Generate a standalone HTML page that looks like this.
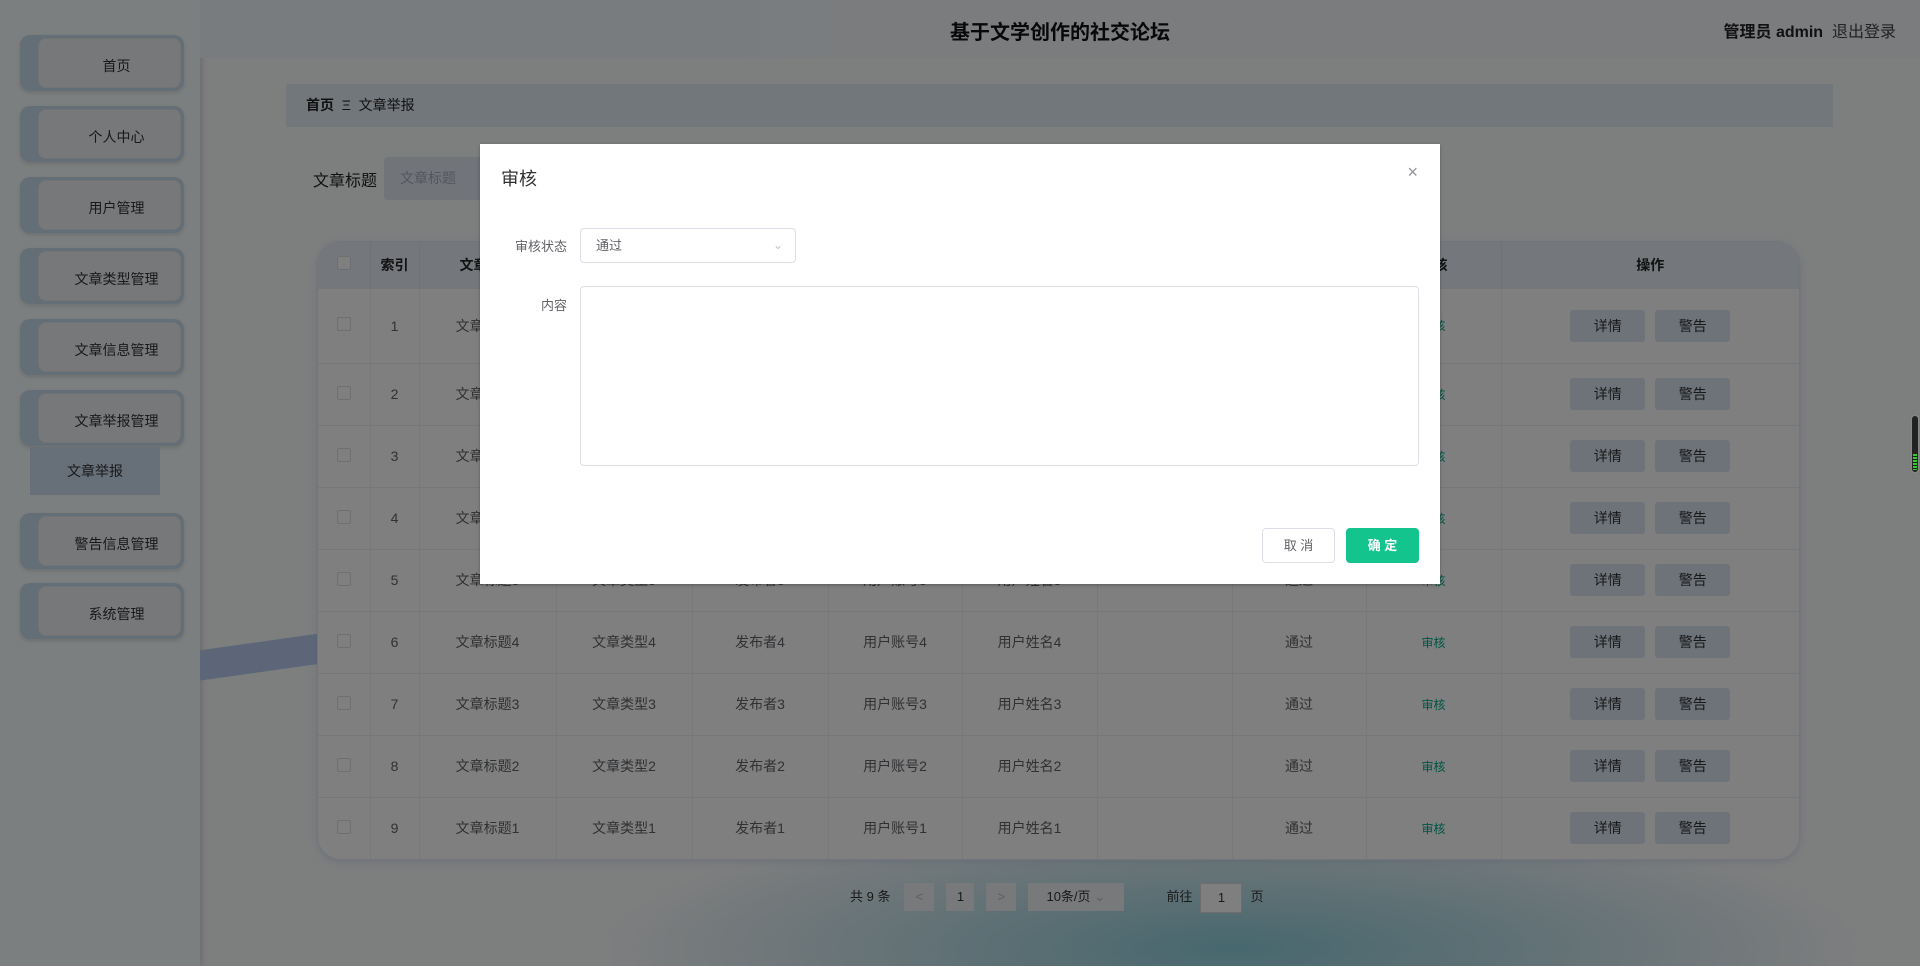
<!DOCTYPE html>
<html><head><meta charset="utf-8"><style>
*{box-sizing:border-box;margin:0;padding:0}
body{width:1920px;height:966px;overflow:hidden;position:relative;font-family:"Liberation Sans","Noto Sans CJK SC",sans-serif;background:#fbfcfd;font-size:14px;color:#606266}
.side{position:absolute;left:0;top:0;width:200px;height:966px;background:#f8fefe;box-shadow:2px 0 6px rgba(0,0,0,.15)}
.mi{position:absolute;left:20px;width:164px;height:56px;border-radius:10px;background:#c9dcef;box-shadow:0 2px 4px rgba(0,0,0,.12)}
.mi div{position:absolute;left:18px;top:3px;right:3px;bottom:3px;border-radius:8px;background:#eef1f4;border:1px solid #e3e6ea;text-align:center;line-height:54px;color:#333;font-size:14px;padding-left:14px}
.sub{position:absolute;left:30px;top:447px;width:130px;height:48px;background:#cfe0f2;text-align:center;line-height:48px;color:#333}
.head{position:absolute;left:200px;top:0;right:0;height:58px;background:linear-gradient(90deg,#f2f8fe,#f6f9fc);}
.title{position:absolute;left:0;right:0;top:16px;text-align:center;font-size:20px;font-weight:bold;color:#111;padding-left:200px}
.user{position:absolute;right:24px;top:18px;font-size:16px;color:#222}
.bc{position:absolute;left:286px;top:84px;width:1547px;height:43px;background:#e5eef8;line-height:43px;padding-left:20px;color:#222}
.wave{position:absolute;left:200px;top:620px;right:0;bottom:0;background:radial-gradient(ellipse 900px 200px at 60% 95%,#8ed0dd 0%,rgba(160,210,225,.5) 40%,transparent 70%),linear-gradient(172deg,transparent 0 30px,#b8cdf0 30px 60px,transparent 60px)}
.tbl{position:absolute;left:317px;top:241px;width:1483px;background:#fff;border-radius:24px;overflow:hidden;border:1px solid #e4ecf6;box-shadow:0 2px 8px rgba(150,180,220,.3)}
table{border-collapse:collapse;width:100%}
th{height:46px;background:#e8f0f9;color:#222;font-weight:bold;border-right:1px solid #dfe6ee}
td{height:62px;text-align:center;border-right:1px solid #eef0f2;border-top:1px solid #eceff2;color:#606266}
tr.f td{height:75px}
.cb{display:inline-block;width:14px;height:14px;border:1px solid #dcdfe6;border-radius:2px;background:#fff}
.btn{display:inline-block;width:75px;height:32px;line-height:32px;background:#dae6f3;border-radius:3px;color:#333;margin:0 5px}
.pag{position:absolute;top:883px;left:850px;height:28px;line-height:28px;color:#333;font-size:13px}
.pag span{display:inline-block;vertical-align:top}
.ov{position:absolute;inset:0;background:rgba(0,0,0,.5)}
.modal{position:absolute;left:480px;top:144px;width:960px;height:440px;background:#fff;box-shadow:0 1px 3px rgba(0,0,0,.3)}
</style></head><body>
<div class="side">
<div class="mi" style="top:35px"><div>首页</div></div>
<div class="mi" style="top:106px"><div>个人中心</div></div>
<div class="mi" style="top:177px"><div>用户管理</div></div>
<div class="mi" style="top:248px"><div>文章类型管理</div></div>
<div class="mi" style="top:319px"><div>文章信息管理</div></div>
<div class="mi" style="top:390px"><div>文章举报管理</div></div>
<div class="sub">文章举报</div>
<div class="mi" style="top:513px"><div>警告信息管理</div></div>
<div class="mi" style="top:583px"><div>系统管理</div></div>
</div>
<div class="head"></div>
<div class="title">基于文学创作的社交论坛</div>
<div class="user"><b>管理员 admin</b>&nbsp;&nbsp;<span style="color:#444">退出登录</span></div>
<div class="wave"></div>
<div class="bc"><b>首页</b>&nbsp;&nbsp;Ξ&nbsp;&nbsp;文章举报</div>
<div style="position:absolute;left:313px;top:167px;font-size:16px;color:#222">文章标题</div>
<div style="position:absolute;left:384px;top:157px;width:200px;height:43px;background:#e2ebf5;border-radius:4px;line-height:43px;padding-left:16px;color:#aab">文章标题</div>
<div class="tbl"><table>
<tr><th style="width:52px"><span class="cb"></span></th><th style="width:49px">索引</th><th style="width:137px">文章标题</th><th style="width:136px">文章类型</th><th style="width:136px">发布者</th><th style="width:134px">用户账号</th><th style="width:135px">用户姓名</th><th style="width:135px">举报内容</th><th style="width:134px">审核状态</th><th style="width:135px">审核</th><th style="border:0">操作</th></tr>
<tr class="f"><td><span class="cb"></span></td><td>1</td><td>文章标题9</td><td>文章类型9</td><td>发布者9</td><td>用户账号9</td><td>用户姓名9</td><td></td><td>通过</td><td style="color:#0a8;font-size:12px">审核</td><td style="border-right:0"><span class="btn">详情</span><span class="btn">警告</span></td></tr>
<tr><td><span class="cb"></span></td><td>2</td><td>文章标题8</td><td>文章类型8</td><td>发布者8</td><td>用户账号8</td><td>用户姓名8</td><td></td><td>通过</td><td style="color:#0a8;font-size:12px">审核</td><td style="border-right:0"><span class="btn">详情</span><span class="btn">警告</span></td></tr>
<tr><td><span class="cb"></span></td><td>3</td><td>文章标题7</td><td>文章类型7</td><td>发布者7</td><td>用户账号7</td><td>用户姓名7</td><td></td><td>通过</td><td style="color:#0a8;font-size:12px">审核</td><td style="border-right:0"><span class="btn">详情</span><span class="btn">警告</span></td></tr>
<tr><td><span class="cb"></span></td><td>4</td><td>文章标题6</td><td>文章类型6</td><td>发布者6</td><td>用户账号6</td><td>用户姓名6</td><td></td><td>通过</td><td style="color:#0a8;font-size:12px">审核</td><td style="border-right:0"><span class="btn">详情</span><span class="btn">警告</span></td></tr>
<tr><td><span class="cb"></span></td><td>5</td><td>文章标题5</td><td>文章类型5</td><td>发布者5</td><td>用户账号5</td><td>用户姓名5</td><td></td><td>通过</td><td style="color:#0a8;font-size:12px">审核</td><td style="border-right:0"><span class="btn">详情</span><span class="btn">警告</span></td></tr>
<tr><td><span class="cb"></span></td><td>6</td><td>文章标题4</td><td>文章类型4</td><td>发布者4</td><td>用户账号4</td><td>用户姓名4</td><td></td><td>通过</td><td style="color:#0a8;font-size:12px">审核</td><td style="border-right:0"><span class="btn">详情</span><span class="btn">警告</span></td></tr>
<tr><td><span class="cb"></span></td><td>7</td><td>文章标题3</td><td>文章类型3</td><td>发布者3</td><td>用户账号3</td><td>用户姓名3</td><td></td><td>通过</td><td style="color:#0a8;font-size:12px">审核</td><td style="border-right:0"><span class="btn">详情</span><span class="btn">警告</span></td></tr>
<tr><td><span class="cb"></span></td><td>8</td><td>文章标题2</td><td>文章类型2</td><td>发布者2</td><td>用户账号2</td><td>用户姓名2</td><td></td><td>通过</td><td style="color:#0a8;font-size:12px">审核</td><td style="border-right:0"><span class="btn">详情</span><span class="btn">警告</span></td></tr>
<tr><td><span class="cb"></span></td><td>9</td><td>文章标题1</td><td>文章类型1</td><td>发布者1</td><td>用户账号1</td><td>用户姓名1</td><td></td><td>通过</td><td style="color:#0a8;font-size:12px">审核</td><td style="border-right:0"><span class="btn">详情</span><span class="btn">警告</span></td></tr>
</table></div>
<div class="pag"><span>共 9 条</span><span style="width:30px;background:#f0f2f5;margin-left:14px;text-align:center;color:#bbb">&lt;</span><span style="width:28px;background:#f0f2f5;margin-left:12px;text-align:center">1</span><span style="width:30px;background:#f0f2f5;margin-left:12px;text-align:center;color:#bbb">&gt;</span><span style="width:96px;background:#f0f2f5;margin-left:12px;padding-left:18px">10条/页 <span style="color:#bbb">⌄</span></span><span style="margin-left:42px">前往</span><span style="width:42px;background:#fff;border:1px solid #ddd;margin-left:8px;text-align:center">1</span><span style="margin-left:8px">页</span></div>
<div class="ov"></div>
<div style="position:absolute;left:1911px;top:415px;width:8px;height:58px;border-radius:4px;background:#222;border:1px solid #888"><div style="position:absolute;bottom:2px;left:1px;width:4px;height:16px;background:repeating-linear-gradient(#3c3 0 2px,#121 2px 3px)"></div></div>
<div class="modal">
<div style="position:absolute;left:21px;top:21px;font-size:18px;color:#303133">审核</div>
<div style="position:absolute;right:22px;top:18px;font-size:18px;color:#909399">×</div>
<div style="position:absolute;left:30px;width:57px;top:92px;text-align:right;font-size:13px;color:#606266">审核状态</div>
<div style="position:absolute;left:100px;top:84px;width:216px;height:35px;border:1px solid #dcdfe6;border-radius:4px;line-height:33px;padding-left:15px;font-size:13px;color:#606266">通过<span style="position:absolute;right:12px;top:0;color:#c0c4cc;font-size:12px">⌄</span></div>
<div style="position:absolute;left:30px;width:57px;top:151px;text-align:right;font-size:13px;color:#606266">内容</div>
<div style="position:absolute;left:100px;top:142px;width:839px;height:180px;border:1px solid #dcdfe6;border-radius:4px"></div>
<div style="position:absolute;left:782px;top:384px;width:73px;height:35px;border:1px solid #dcdfe6;border-radius:4px;text-align:center;line-height:33px;font-size:13px;color:#606266">取 消</div>
<div style="position:absolute;left:866px;top:384px;width:73px;height:35px;background:#13c48d;border-radius:4px;text-align:center;line-height:35px;font-size:13px;color:#fff;font-weight:bold">确 定</div>
</div>
</body></html>
